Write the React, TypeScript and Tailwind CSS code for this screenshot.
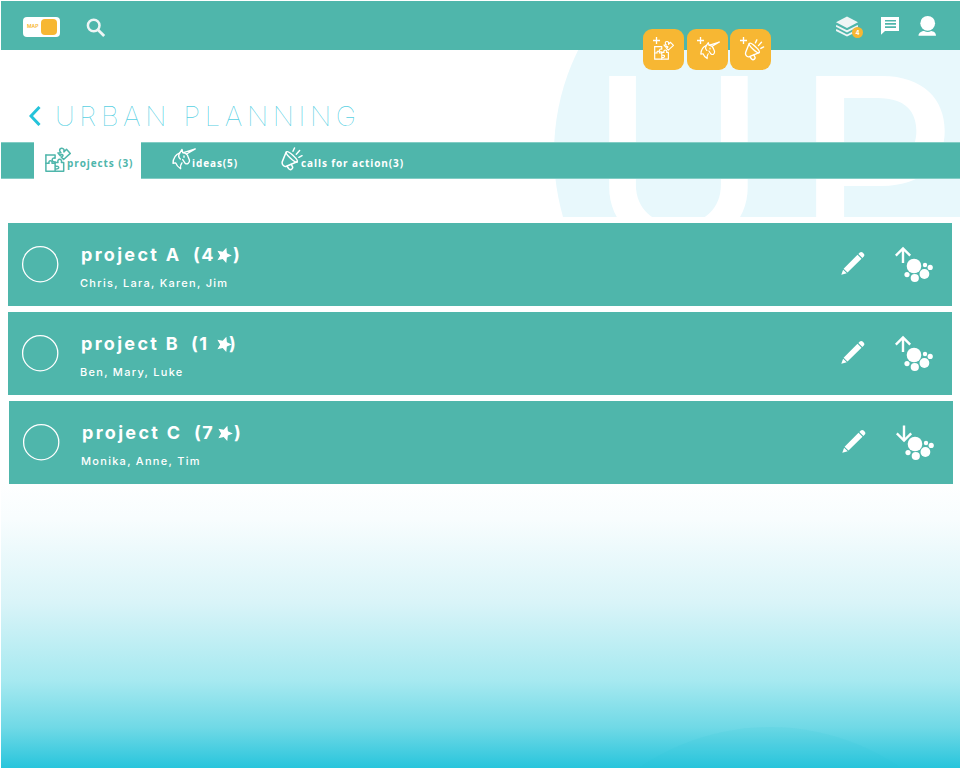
import React from "react";

type IconProps = { className?: string };

function PuzzleIcon({ className }: IconProps) {
  return (
    <svg viewBox="0 0 26 26" className={className} fill="none" stroke="currentColor" strokeWidth="1.5" strokeLinejoin="round" strokeLinecap="round">
      <path d="M.9 8h9.200v3.300c-3.800-1.400-4 4.400 0 3.500v1.500" />
      <path d="M.9 8V24.300H18.700v-8.800h-2.300c1.400-4.200-4.800-4.200-3.400 0h-2.900" />
      <path d="M.9 16.300h3.200c-1.300-3.400 3.800-3.400 2.900 0h3.100v8M10.100 19.400c4.800-1.200 4.800 3.200.2 2.600" />
      <path d="M13 5.900l3-.2c-3.300-2.800.2-6.300 3-3.100L18.900 5 21.500 2.300 25.300 6.400 18.600 12.500l-2.300-2.300c3.300-1.500 1-4.200-1-1.500z" />
    </svg>
  );
}

function UnicornIcon({ className }: IconProps) {
  return (
    <svg viewBox="0 0 24 22" className={className} fill="none" stroke="currentColor" strokeWidth="1.4" strokeLinejoin="round" strokeLinecap="round">
      <path d="M11.500 4.600L23.300.9 14.600 6" />
      <path d="M10.800 4.600L10 1.500 7.800 4.800C4 6.300 1.200 10 1 15.300l2.700-.4c.8 2.400 2.500 4.400 4.900 5.800-.4-2.500 0-4.200 1.300-5.800" />
      <path d="M10.800 4.600c3.200.4 4.800 2.100 5.400 4.400l1.300 3.300c.2 3-2.300 4.300-4.300 3l-2.500-3.700" />
      <path d="M7.800 4.800C6.300 7 6.600 9.500 8.300 11M12 8v1.200" />
    </svg>
  );
}

function MegaphoneIcon({ className }: IconProps) {
  return (
    <svg viewBox="0 0 22 24" className={className} fill="none" stroke="currentColor" strokeWidth="1.5" strokeLinejoin="round" strokeLinecap="round">
      <ellipse cx="10.800" cy="9.900" rx="7.300" ry="1.900" transform="rotate(43 10.800 9.900)" />
      <path d="M5.200 5L1.400 14.400c-1 2.600 1.200 5.700 4 4.900l10.700-4.500" />
      <path d="M6 19.300l1.800 2.500c2 2 5-.6 3.300-2.800l-.9-1.600" />
      <path d="M12 4.200l1.500-3.200M15.300 7.200l3.300-3.600M17.900 10.300l3.100-1.600" />
    </svg>
  );
}

function Star() {
  return (
    <svg viewBox="0 0 24 24" className="h-[16px] w-[16px] shrink-0 rotate-[18deg]" fill="currentColor">
      <path d="M12 .6l3.300 7.500 8.100.8-6.100 5.500 1.700 8.100-7-4.200-7 4.200 1.700-8.100L.6 8.900l8.100-.8z" />
    </svg>
  );
}

function Pencil() {
  return (
    <svg viewBox="0 0 24 26" className="h-[26px] w-6" fill="currentColor">
      <path d="M2.600 18.700L16.500 4.700l4 4L6.500 22.500zM17.400 3.900l1.400-1.400c.8-.8 2-.8 2.800 0l1.200 1.200c.8.8.8 2 0 2.800L21.400 7.900zM2.100 19.700l3.700 3.600L.3 24.700z" />
    </svg>
  );
}

function Rank({ down = false }: { down?: boolean }) {
  return (
    <svg viewBox="0 0 40 38" className="h-[38px] w-10" fill="currentColor">
      <g fill="none" stroke="currentColor" strokeWidth="2.400">
        {down ? <path d="M8 1.500V16.500M.8 9.400L8 16.600l7.200-7.200" /> : <path d="M8 17V2.500M.8 9.600L8 2.400l7.200 7.200" />}
      </g>
      <circle cx="19" cy="20" r="7.300" />
      <circle cx="29.400" cy="28" r="4.900" />
      <circle cx="19.800" cy="32" r="4.100" />
      <circle cx="12" cy="28.600" r="2.600" />
      <circle cx="30" cy="19" r="2.200" />
      <circle cx="35.200" cy="21.400" r="2.600" />
    </svg>
  );
}

function AddButton({ children }: { children: React.ReactNode }) {
  return (
    <button className="relative flex h-[41px] w-[41px] items-center justify-center rounded-[9px] bg-[#f7b733] text-white">
      <svg viewBox="0 0 8 8" className="absolute left-[10px] top-[8px] h-[7px] w-[7px]" stroke="currentColor" strokeWidth="1.500">
        <path d="M4 0v8M0 4h8" />
      </svg>
      {children}
    </button>
  );
}

type RowProps = { name: string; count: string; people: string; down?: boolean; countClass: string; closeClass: string; shifted?: boolean };

function ProjectRow({ name, count, people, down, countClass, closeClass, shifted }: RowProps) {
  return (
    <article className={`flex h-[83px] w-[944px] items-start bg-[#4fb6ab] text-white ${shifted ? "ml-[9px]" : "ml-2"}`}>
      <svg viewBox="0 0 38 38" className="ml-[13px] mt-[22px] h-[38px] w-[38px] shrink-0" fill="none" stroke="currentColor" strokeWidth="1.300">
        <circle cx="19.200" cy="19.200" r="17.600" />
      </svg>
      <div className="ml-[21px] mt-[20px] grow">
        <h2 className="flex h-6 items-center whitespace-pre pl-px text-[18px] font-bold leading-6">
          <span className="w-[99px] tracking-[2.300px]">{name}</span>
          <span className={countClass}>({count}</span>
          <Star />
          <span className={closeClass}>)</span>
        </h2>
        <p className="mt-[8px] text-[11px] font-medium leading-4 tracking-[1.280px]">{people}</p>
      </div>
      <span className="mt-[27px]"><Pencil /></span>
      <span className="ml-[30px] mr-[17px] mt-[23px]"><Rank down={down} /></span>
    </article>
  );
}

export default function App() {
  return (
    <main className="relative isolate h-[768px] w-[960px] overflow-hidden bg-white pl-px pt-px font-['Inter',sans-serif]">
      <div className="absolute left-px top-[50px] -z-10 h-[167px] w-[959px] overflow-hidden">
        <div className="absolute left-[553px] top-[-128px] h-[462px] w-[462px] rounded-full bg-[#e8f8fc]" />
        <div className="absolute left-[589px] top-[-29px] flex whitespace-nowrap text-[232px] font-medium leading-[280px] text-white">
          <span className="w-[206px] origin-left scale-x-[1.030]">U</span>
          <span className="origin-left scale-x-[1.080]">P</span>
        </div>
      </div>
      <div className="absolute bottom-0 left-px -z-10 h-[290px] w-[959px] overflow-hidden bg-[linear-gradient(to_bottom,#ffffff_0%,#f8fdfe_14%,#d9f4f8_43%,#a6e9f0_70%,#70d9e6_86%,#28c5dc_100%)]">
        <div className="absolute left-[539px] top-[249px] h-[460px] w-[460px] rounded-full bg-[#28c5dc]/10" />
      </div>

      <header className="flex h-[49px] items-start bg-[#4fb6ab] text-white">
        <div className="ml-[22px] mt-4 flex h-5 w-[37px] items-center justify-between rounded-[4px] bg-white pl-1 pr-[3px] text-[5px] font-semibold text-[#f7b733]">
          MAP<span className="h-4 w-4 rounded-[4px] bg-[#f7b733]" />
        </div>
        <svg viewBox="0 0 20 20" className="ml-[26px] mt-[17px] h-5 w-5 text-[#eff5f5]" fill="none" stroke="currentColor" strokeWidth="2.500">
          <circle cx="7.700" cy="7.500" r="5.800" /><path d="M11.900 11.700l6.300 6.300" strokeWidth="2.800" />
        </svg>
        <div className="ml-[537px] mt-7 flex">
          <AddButton><PuzzleIcon className="ml-[1px] mt-[1px] h-[21px] w-[20px]" /></AddButton>
          <span className="w-[3px]" />
          <AddButton><UnicornIcon className="ml-[5px] mt-px h-[19px] w-[20px]" /></AddButton>
          <span className="w-[2px]" />
          <AddButton><MegaphoneIcon className="ml-[7px] mt-px h-[22px] w-[21px]" /></AddButton>
        </div>
        <div className="relative ml-[65px] mt-[15px] h-6 w-7">
          <svg viewBox="0 0 24 22" className="h-[21px] w-[22px] text-[#eff5f5]" fill="currentColor">
            <path d="M12 0l12 6.300L12 12.700 0 6.300z" />
            <path d="M0 10.200l12 6.100 12-6.100M0 14.700l12 6.100 12-6.100" fill="none" stroke="currentColor" strokeWidth="2" />
          </svg>
          <span className="absolute left-4 top-[11px] flex h-[11px] w-[11px] items-center justify-center rounded-full bg-[#f7b733] text-[6px] font-bold leading-none">4</span>
        </div>
        <svg viewBox="0 0 19 19" className="ml-[16px] mt-[15px] h-[19px] w-[19px]" fill="currentColor">
          <path fillRule="evenodd" d="M1 1h18v14H5L1 18.700zM5 3.900v1.700h11V3.900zm0 3.200v1.700h11V7.100zm0 3.200V12h11v-1.700z" />
        </svg>
        <svg viewBox="0 0 20 21" className="ml-[19px] mt-[14px] h-[21px] w-5" fill="currentColor">
          <circle cx="9.700" cy="8.300" r="7.400" /><path d="M.5 20.800c0-3.200 3.500-4.600 5.600-4.700 2.500 1.200 5 1.200 7 0 2.500.2 4.900 1.700 4.900 4.700z" />
        </svg>
      </header>

      <div className="flex h-[92px] items-start">
        <svg viewBox="0 0 12 20" className="ml-7 mt-[56px] h-5 w-3" fill="none" stroke="#25c3da" strokeWidth="3">
          <path d="M10.500 1L2 10l8.500 9" />
        </svg>
        <h1 className="ml-[14px] mt-[47px] whitespace-nowrap text-[27.500px] font-thin leading-[38px] tracking-[4.600px] text-[#25c3da]/80">URBAN PLANNING</h1>
      </div>

      <nav className="flex h-[37px] items-start border-y border-[#83cdc5] bg-[#4fb6ab] font-['Open_Sans',sans-serif] text-[10px] font-bold leading-4 text-white">
        <a className="-my-px ml-[33px] flex h-[37px] w-[107px] items-start bg-white text-[#4fb6ab]">
          <PuzzleIcon className="ml-[11px] mt-[5px] h-[26px] w-[26px] shrink-0" />
          <span className="-ml-[4px] mt-[13px] whitespace-nowrap tracking-[0.900px]">projects (3)</span>
        </a>
        <a className="ml-[31px] flex w-[66px] items-start">
          <UnicornIcon className="mt-[5px] h-[22px] w-6 shrink-0" />
          <span className="-ml-[4px] mt-[12px] whitespace-nowrap tracking-[0.900px]">ideas(5)</span>
        </a>
        <a className="ml-[43px] flex items-start">
          <MegaphoneIcon className="mt-[4px] h-6 w-[22px] shrink-0" />
          <span className="-ml-[2px] mt-[12px] whitespace-nowrap tracking-[0.900px]">calls for action(3)</span>
        </a>
      </nav>

      <section className="-ml-px mt-[44px] flex flex-col gap-[6px]">
        <ProjectRow name="project A" count="4" people="Chris, Lara, Karen, Jim" countClass="ml-[13px] w-[23px] tracking-[1.500px]" closeClass="ml-px" />
        <ProjectRow name="project B" count="1" people="Ben, Mary, Luke" countClass="ml-[11px] w-[25px] tracking-[1.500px]" closeClass="-ml-[3px]" />
        <ProjectRow name="project C" count="7" people="Monika, Anne, Tim" down countClass="ml-[13px] w-[23px] tracking-[1.500px]" closeClass="ml-px" shifted />
      </section>
    </main>
  );
}
